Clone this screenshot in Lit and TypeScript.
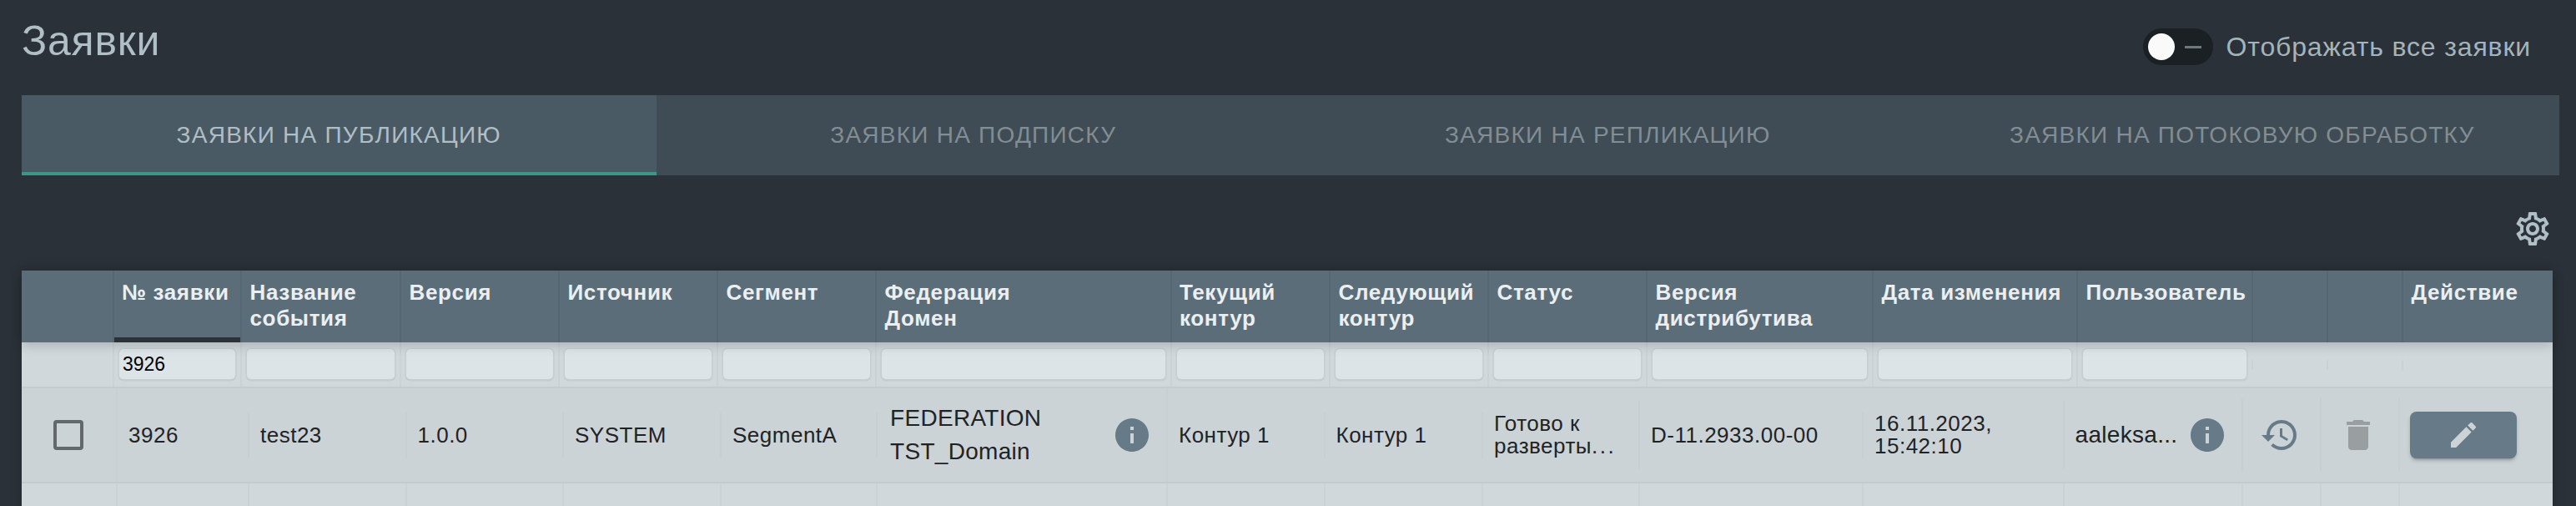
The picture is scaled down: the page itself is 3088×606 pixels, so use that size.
import { LitElement, html, css, svg } from 'lit';
import { customElement } from 'lit/decorators.js';

const icons = {
  info: svg`<path d="M12 2C6.48 2 2 6.48 2 12s4.48 10 10 10 10-4.48 10-10S17.52 2 12 2zm1 15h-2v-6h2v6zm0-8h-2V7h2v2z"/>`,
  history: svg`<path d="M13 3c-4.97 0-9 4.03-9 9H1l3.89 3.89.07.14L9 12H6c0-3.87 3.13-7 7-7s7 3.13 7 7-3.13 7-7 7c-1.93 0-3.68-.79-4.94-2.06l-1.42 1.42C8.27 19.99 10.51 21 13 21c4.97 0 9-4.03 9-9s-4.03-9-9-9zm-1 5v5l4.28 2.54.72-1.21-3.5-2.08V8H12z"/>`,
  trash: svg`<path d="M6 19c0 1.1.9 2 2 2h8c1.1 0 2-.9 2-2V7H6v12zM19 4h-3.5l-1-1h-5l-1 1H5v2h14V4z"/>`,
  edit: svg`<path d="M3 17.25V21h3.75L17.81 9.94l-3.75-3.75L3 17.25zM20.71 7.04c.39-.39.39-1.02 0-1.41l-2.34-2.34c-.39-.39-1.02-.39-1.41 0l-1.83 1.83 3.75 3.75 1.83-1.83z"/>`,
  gear: svg`<path d="M19.43 12.98c.04-.32.07-.64.07-.98 0-.34-.03-.66-.07-.98l2.11-1.65c.19-.15.24-.42.12-.64l-2-3.46c-.09-.16-.26-.25-.44-.25-.06 0-.12.01-.17.03l-2.49 1c-.52-.4-1.08-.73-1.69-.98l-.38-2.65C14.46 2.18 14.25 2 14 2h-4c-.25 0-.46.18-.49.42l-.38 2.65c-.61.25-1.17.59-1.69.98l-2.49-1c-.06-.02-.12-.03-.18-.03-.17 0-.34.09-.43.25l-2 3.46c-.13.22-.07.49.12.64l2.11 1.65c-.04.32-.07.65-.07.98 0 .33.03.66.07.98l-2.11 1.65c-.19.15-.24.42-.12.64l2 3.46c.09.16.26.25.44.25.06 0 .12-.01.17-.03l2.49-1c.52.4 1.08.73 1.69.98l.38 2.65c.03.24.24.42.49.42h4c.25 0 .46-.18.49-.42l.38-2.65c.61-.25 1.17-.59 1.69-.98l2.49 1c.06.02.12.03.18.03.17 0 .34-.09.43-.25l2-3.46c.12-.22.07-.49-.12-.64l-2.11-1.65zm-1.98-1.71c.04.31.05.52.05.73 0 .21-.02.43-.05.73l-.14 1.13.89.7 1.08.84-.7 1.21-1.27-.51-1.04-.42-.9.68c-.43.32-.84.56-1.25.73l-1.06.43-.16 1.13-.2 1.35h-1.4l-.19-1.35-.16-1.13-1.06-.43c-.43-.18-.83-.41-1.23-.71l-.91-.7-1.06.43-1.27.51-.7-1.21 1.08-.84.89-.7-.14-1.13c-.03-.31-.05-.54-.05-.74s.02-.43.05-.73l.14-1.13-.89-.7-1.08-.84.7-1.21 1.27.51 1.04.42.9-.68c.43-.32.84-.56 1.25-.73l1.06-.43.16-1.13.2-1.35h1.39l.19 1.35.16 1.13 1.06.43c.43.18.83.41 1.23.71l.91.7 1.06-.43 1.27-.51.7 1.21-1.07.85-.89.7.14 1.13zM12 8c-2.21 0-4 1.79-4 4s1.79 4 4 4 4-1.79 4-4-1.79-4-4-4zm0 6c-1.1 0-2-.9-2-2s.9-2 2-2 2 .9 2 2-.9 2-2 2z"/>`,
};

const icon = (name: keyof typeof icons, cls: string) =>
  html`<svg class="icon ${cls}" viewBox="0 0 24 24">${icons[name]}</svg>`;

const tabs = [
  'Заявки на публикацию',
  'Заявки на подписку',
  'Заявки на репликацию',
  'Заявки на потоковую обработку',
];

const headers = [
  '',
  '№ заявки',
  'Название события',
  'Версия',
  'Источник',
  'Сегмент',
  'Федерация\nДомен',
  'Текущий контур',
  'Следующий контур',
  'Статус',
  'Версия дистрибутива',
  'Дата изменения',
  'Пользователь',
  '',
  '',
  'Действие',
];

@customElement('app-root')
export class AppRoot extends LitElement {
  static styles = css`
    :host {
      display: block;
      height: 606px;
      overflow: hidden;
      background: #2a3138;
      font-family: 'Liberation Sans', Arial, sans-serif;
    }
    .page {
      padding: 0 20px 0 26px;
    }

    /* top bar */
    .top {
      height: 114px;
      display: flex;
      justify-content: space-between;
      align-items: flex-start;
    }
    .title {
      margin: 21px 0 0;
      font-size: 50px;
      line-height: 56px;
      font-weight: 400;
      letter-spacing: 0.8px;
      color: #b0bec5;
    }
    .toggle {
      display: flex;
      align-items: center;
      gap: 16px;
      margin: 34px 34px 0 0;
      font-size: 32px;
      letter-spacing: 0.85px;
      color: #a5b3ba;
    }
    .track {
      width: 84px;
      height: 44px;
      border-radius: 22px;
      background: #1b2024;
      display: flex;
      align-items: center;
      gap: 12px;
      padding-left: 6px;
      box-sizing: border-box;
    }
    .knob {
      width: 32px;
      height: 32px;
      border-radius: 50%;
      background: #fafafa;
    }
    .dash {
      width: 20px;
      height: 3px;
      background: #6f787d;
    }

    /* tabs */
    .tabs {
      display: grid;
      grid-template-columns: repeat(4, 1fr);
      height: 96px;
      background: #3f4c55;
    }
    .tab {
      display: flex;
      align-items: center;
      justify-content: center;
      box-sizing: border-box;
      text-transform: uppercase;
      font-size: 28px;
      letter-spacing: 1.25px;
      color: #828d94;
    }
    .tab.active {
      background: #4a5a65;
      color: #b0bec5;
      border-bottom: 4px solid #3f9688;
      padding-top: 4px;
    }

    .tools {
      height: 114px;
      display: flex;
      justify-content: flex-end;
      padding: 40px 8px 0 0;
      box-sizing: border-box;
    }
    .icon {
      display: block;
      width: 48px;
      height: 48px;
      flex: none;
      fill: #667a87;
    }
    .gear {
      fill: #b0bec5;
    }

    /* table */
    .table {
      margin-right: 8px;
      box-shadow: 0 0 14px rgba(0, 0, 0, 0.15);
    }
    .head,
    .filters {
      display: grid;
      grid-template-columns: 109px 153px 191px 190px 190px 190px 353.5px 190.5px 190px 190px 271px 245px 210px 90px 90px 1fr;
    }
    .head {
      height: 86px;
      background: #5a6d79;
      position: relative;
      box-shadow: 0 4px 12px rgba(0, 0, 0, 0.17);
    }
    .hc {
      border-left: 2px solid #546773;
      padding: 11px 0 0 9.5px;
      box-sizing: border-box;
      font-size: 26px;
      line-height: 31px;
      font-weight: 700;
      letter-spacing: 0.65px;
      color: #eceff1;
      white-space: pre-line;
      min-width: 0;
    }
    .hc:first-child {
      border-left: 0;
    }
    .hc.sorted {
      padding-left: 9px;
      box-shadow: inset 0 -6px 0 #2a3138;
    }
    .filters {
      height: 53px;
      align-items: center;
      background: #d0d8db;
      border-bottom: 2px solid #c4cccf;
    }
    .fc {
      height: 100%;
      border-left: 2px solid #cad2d5;
      box-sizing: border-box;
      display: flex;
      align-items: center;
      padding: 0 6px 1px 6px;
    }
    .fc.stub {
      height: 12px;
      padding: 0;
    }
    .fc.none {
      border-left: 0;
    }
    input {
      width: 100%;
      min-width: 0;
      height: 36px;
      box-sizing: border-box;
      margin: 0;
      padding: 0 4px;
      border: 0;
      border-radius: 5px;
      background: #dde4e7;
      box-shadow: 0 0 0 1.5px #c7cfd2, 0 1px 0 1.5px #c3cbce;
      outline: none;
      font: 23px 'Liberation Sans', Arial, sans-serif;
      color: #000;
    }
    .row,
    .next {
      display: grid;
      grid-template-columns: 113px 158px 188.5px 188.5px 189px 187px 348px 188.5px 189.5px 188px 268px 240.6px 214.4px 94px 94px 1fr;
    }
    .row {
      height: 112px;
      align-items: center;
      background: #cbd3d7;
      border-bottom: 2px solid #c3cbcf;
      font-size: 26px;
      letter-spacing: 0.5px;
      color: #1f2326;
    }
    .next {
      height: 40px;
      background: #d0d8db;
    }
    .next div {
      border-left: 2px solid #cad2d5;
    }
    .next div:first-child {
      border-left: 0;
    }
    .c {
      display: flex;
      align-items: center;
      box-sizing: border-box;
      border-left: 2px solid #c7cfd3;
      padding-left: 13px;
      min-width: 0;
    }
    .c.first {
      border-left: 0;
      padding-left: 38px;
    }
    .h55 {
      height: 55px;
    }
    .h82 {
      height: 82px;
    }
    .h88 {
      height: 88px;
    }
    .full {
      height: 112px;
    }
    .tight {
      padding-left: 6px;
    }
    .box {
      width: 36px;
      height: 36px;
      box-sizing: border-box;
      border: 4px solid #62686c;
      border-radius: 4px;
    }
    .fed {
      flex: 1;
      font-size: 28px;
      line-height: 40px;
      letter-spacing: 0.3px;
      padding-left: 2px;
    }
    .user {
      flex: 1;
      min-width: 0;
      white-space: nowrap;
      font-size: 28px;
      letter-spacing: 0.3px;
    }
    .lines {
      line-height: 27px;
    }
    .dots {
      letter-spacing: 2.5px;
    }
    .center {
      justify-content: center;
      padding: 0 4px 0 0;
    }
    .trash {
      fill: #999ea1;
    }
    .edit-btn {
      width: 128px;
      height: 56px;
      margin-left: 6px;
      border: 0;
      padding: 0;
      border-radius: 8px;
      background: #667a87;
      display: flex;
      align-items: center;
      justify-content: center;
      box-shadow: 0 3px 3px -2px rgba(0, 0, 0, 0.25), 0 3px 5px rgba(0, 0, 0, 0.14);
    }
    .edit-btn .icon {
      width: 40px;
      height: 40px;
      fill: #cbd3d7;
    }
    .gap17 {
      width: 17px;
      flex: none;
    }
  `;

  render() {
    return html`
      <div class="page">
        <div class="top">
          <h1 class="title">Заявки</h1>
          <div class="toggle">
            <div class="track"><div class="knob"></div><div class="dash"></div></div>
            <span>Отображать все заявки</span>
          </div>
        </div>

        <div class="tabs">
          ${tabs.map((t, i) => html`<div class="tab ${i === 0 ? 'active' : ''}">${t}</div>`)}
        </div>

        <div class="tools">${icon('gear', 'gear')}</div>

        <div class="table">
          <div class="head">
            ${headers.map((h, i) => html`<div class="hc ${i === 1 ? 'sorted' : ''}">${h}</div>`)}
          </div>
          <div class="filters">
            ${headers.map((_, i) => {
              if (i === 0) return html`<div class="fc none"></div>`;
              if (i === 1) return html`<div class="fc"><input .value=${'3926'} /></div>`;
              if (i > 12) return html`<div class="fc stub"></div>`;
              return html`<div class="fc"><input /></div>`;
            })}
          </div>
          <div class="row">
            <div class="c first"><div class="box"></div></div>
            <div class="c full">3926</div>
            <div class="c h55">test23</div>
            <div class="c h55">1.0.0</div>
            <div class="c h55">SYSTEM</div>
            <div class="c h55">SegmentA</div>
            <div class="c h55">
              <div class="fed">FEDERATION<br />TST_Domain</div>
              ${icon('info', 'info')}
              <span class="gap17"></span>
            </div>
            <div class="c full">Контур 1</div>
            <div class="c h55">Контур 1</div>
            <div class="c h55"><div class="lines">Готово к<br />разверты<span class="dots">...</span></div></div>
            <div class="c h82">D-11.2933.00-00</div>
            <div class="c h55"><div class="lines">16.11.2023,<br />15:42:10</div></div>
            <div class="c h82">
              <div class="user">aaleksa...</div>
              ${icon('info', 'info')}
              <span class="gap17"></span>
            </div>
            <div class="c h88 center">${icon('history', 'history')}</div>
            <div class="c h88 center">${icon('trash', 'trash')}</div>
            <div class="c h88 tight">
              <button class="edit-btn">${icon('edit', 'edit')}</button>
            </div>
          </div>
          <div class="next">${headers.map(() => html`<div></div>`)}</div>
        </div>
      </div>
    `;
  }
}
